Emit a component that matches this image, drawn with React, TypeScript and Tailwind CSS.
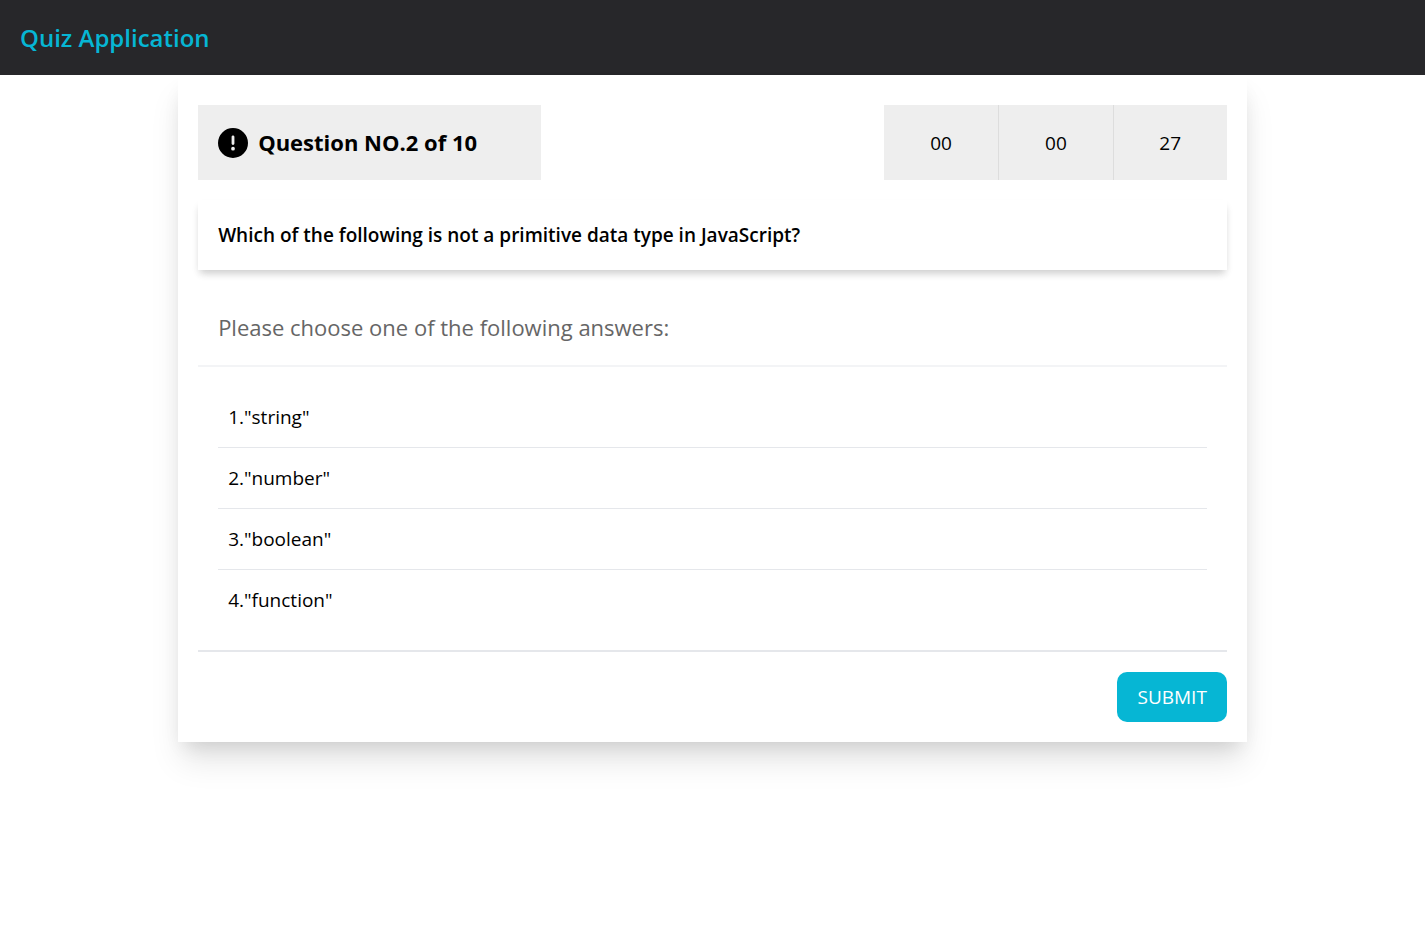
import { useState } from "react";

const answers = ["string", "number", "boolean", "function"];
const time = ["00", "00", "27"];

function AlertIcon() {
  return (
    <svg viewBox="0 0 512 512" className="size-[30px] shrink-0" fill="currentColor" aria-hidden="true">
      <path d="M256 512A256 256 0 1 0 256 0a256 256 0 1 0 0 512zm0-384c13.300 0 24 10.700 24 24V264c0 13.300-10.700 24-24 24s-24-10.700-24-24V152c0-13.300 10.700-24 24-24zM224 352a32 32 0 1 1 64 0 32 32 0 1 1-64 0z" />
    </svg>
  );
}

export default function App() {
  const [selected, setSelected] = useState<number | null>(null);
  return (
    <div className="min-h-screen bg-white font-['Segoe_UI','Open_Sans','Noto_Sans',sans-serif] text-black">
      <header className="flex h-[75px] items-center bg-[#27272a] px-5">
        <h1 className="text-2xl font-semibold text-[#06b6d4]">Quiz Application</h1>
      </header>
      <main className="mx-auto w-3/4 px-5 pt-[30px] pb-5 shadow-[0_22px_30px_-3px_rgba(0,0,0,0.1),0_10px_20px_-8px_rgba(0,0,0,0.14)]">
        <div className="flex justify-between">
          <div className="flex h-[75px] w-1/3 items-center gap-[10px] bg-[#eeeeee] px-5">
            <AlertIcon />
            <h2 className="text-[22px] font-bold">Question NO.2 of 10</h2>
          </div>
          <div role="timer" className="grid h-[75px] w-1/3 grid-cols-3 bg-[#eeeeee]">
            {time.map((t, i) => (
              <div key={i} className="flex items-center justify-center border-l border-[#dddddd] text-[19px] leading-[30px] first:border-l-0">{t}</div>
            ))}
          </div>
        </div>
        <p className="mt-5 p-5 text-[19px] leading-[30px] font-semibold shadow-[0_5px_8px_-2px_rgba(0,0,0,0.16),0_6px_8px_-2px_rgba(0,0,0,0.06)]">
          Which of the following is not a primitive data type in JavaScript?
        </p>
        <h3 className="mt-5 border-b-2 border-gray-100 p-5 text-[22px] leading-[35px] font-medium text-[#666666]">
          Please choose one of the following answers:
        </h3>
        <ul className="border-b-2 border-gray-200 p-5">
          {answers.map((a, i) => (
            <li key={a} className="border-b border-gray-200 last:border-b-0">
              <button
                type="button"
                aria-pressed={selected === i}
                onClick={() => setSelected(i)}
                className="flex h-[60px] w-full items-center px-[10px] text-[19px] leading-[30px]"
              >
                {i + 1}."{a}"
              </button>
            </li>
          ))}
        </ul>
        <div className="mt-5 flex justify-end">
          <button type="button" className="h-[50px] rounded-[10px] bg-[#06b6d4] px-5 text-[19px] leading-[30px] text-white">
            SUBMIT
          </button>
        </div>
      </main>
    </div>
  );
}
